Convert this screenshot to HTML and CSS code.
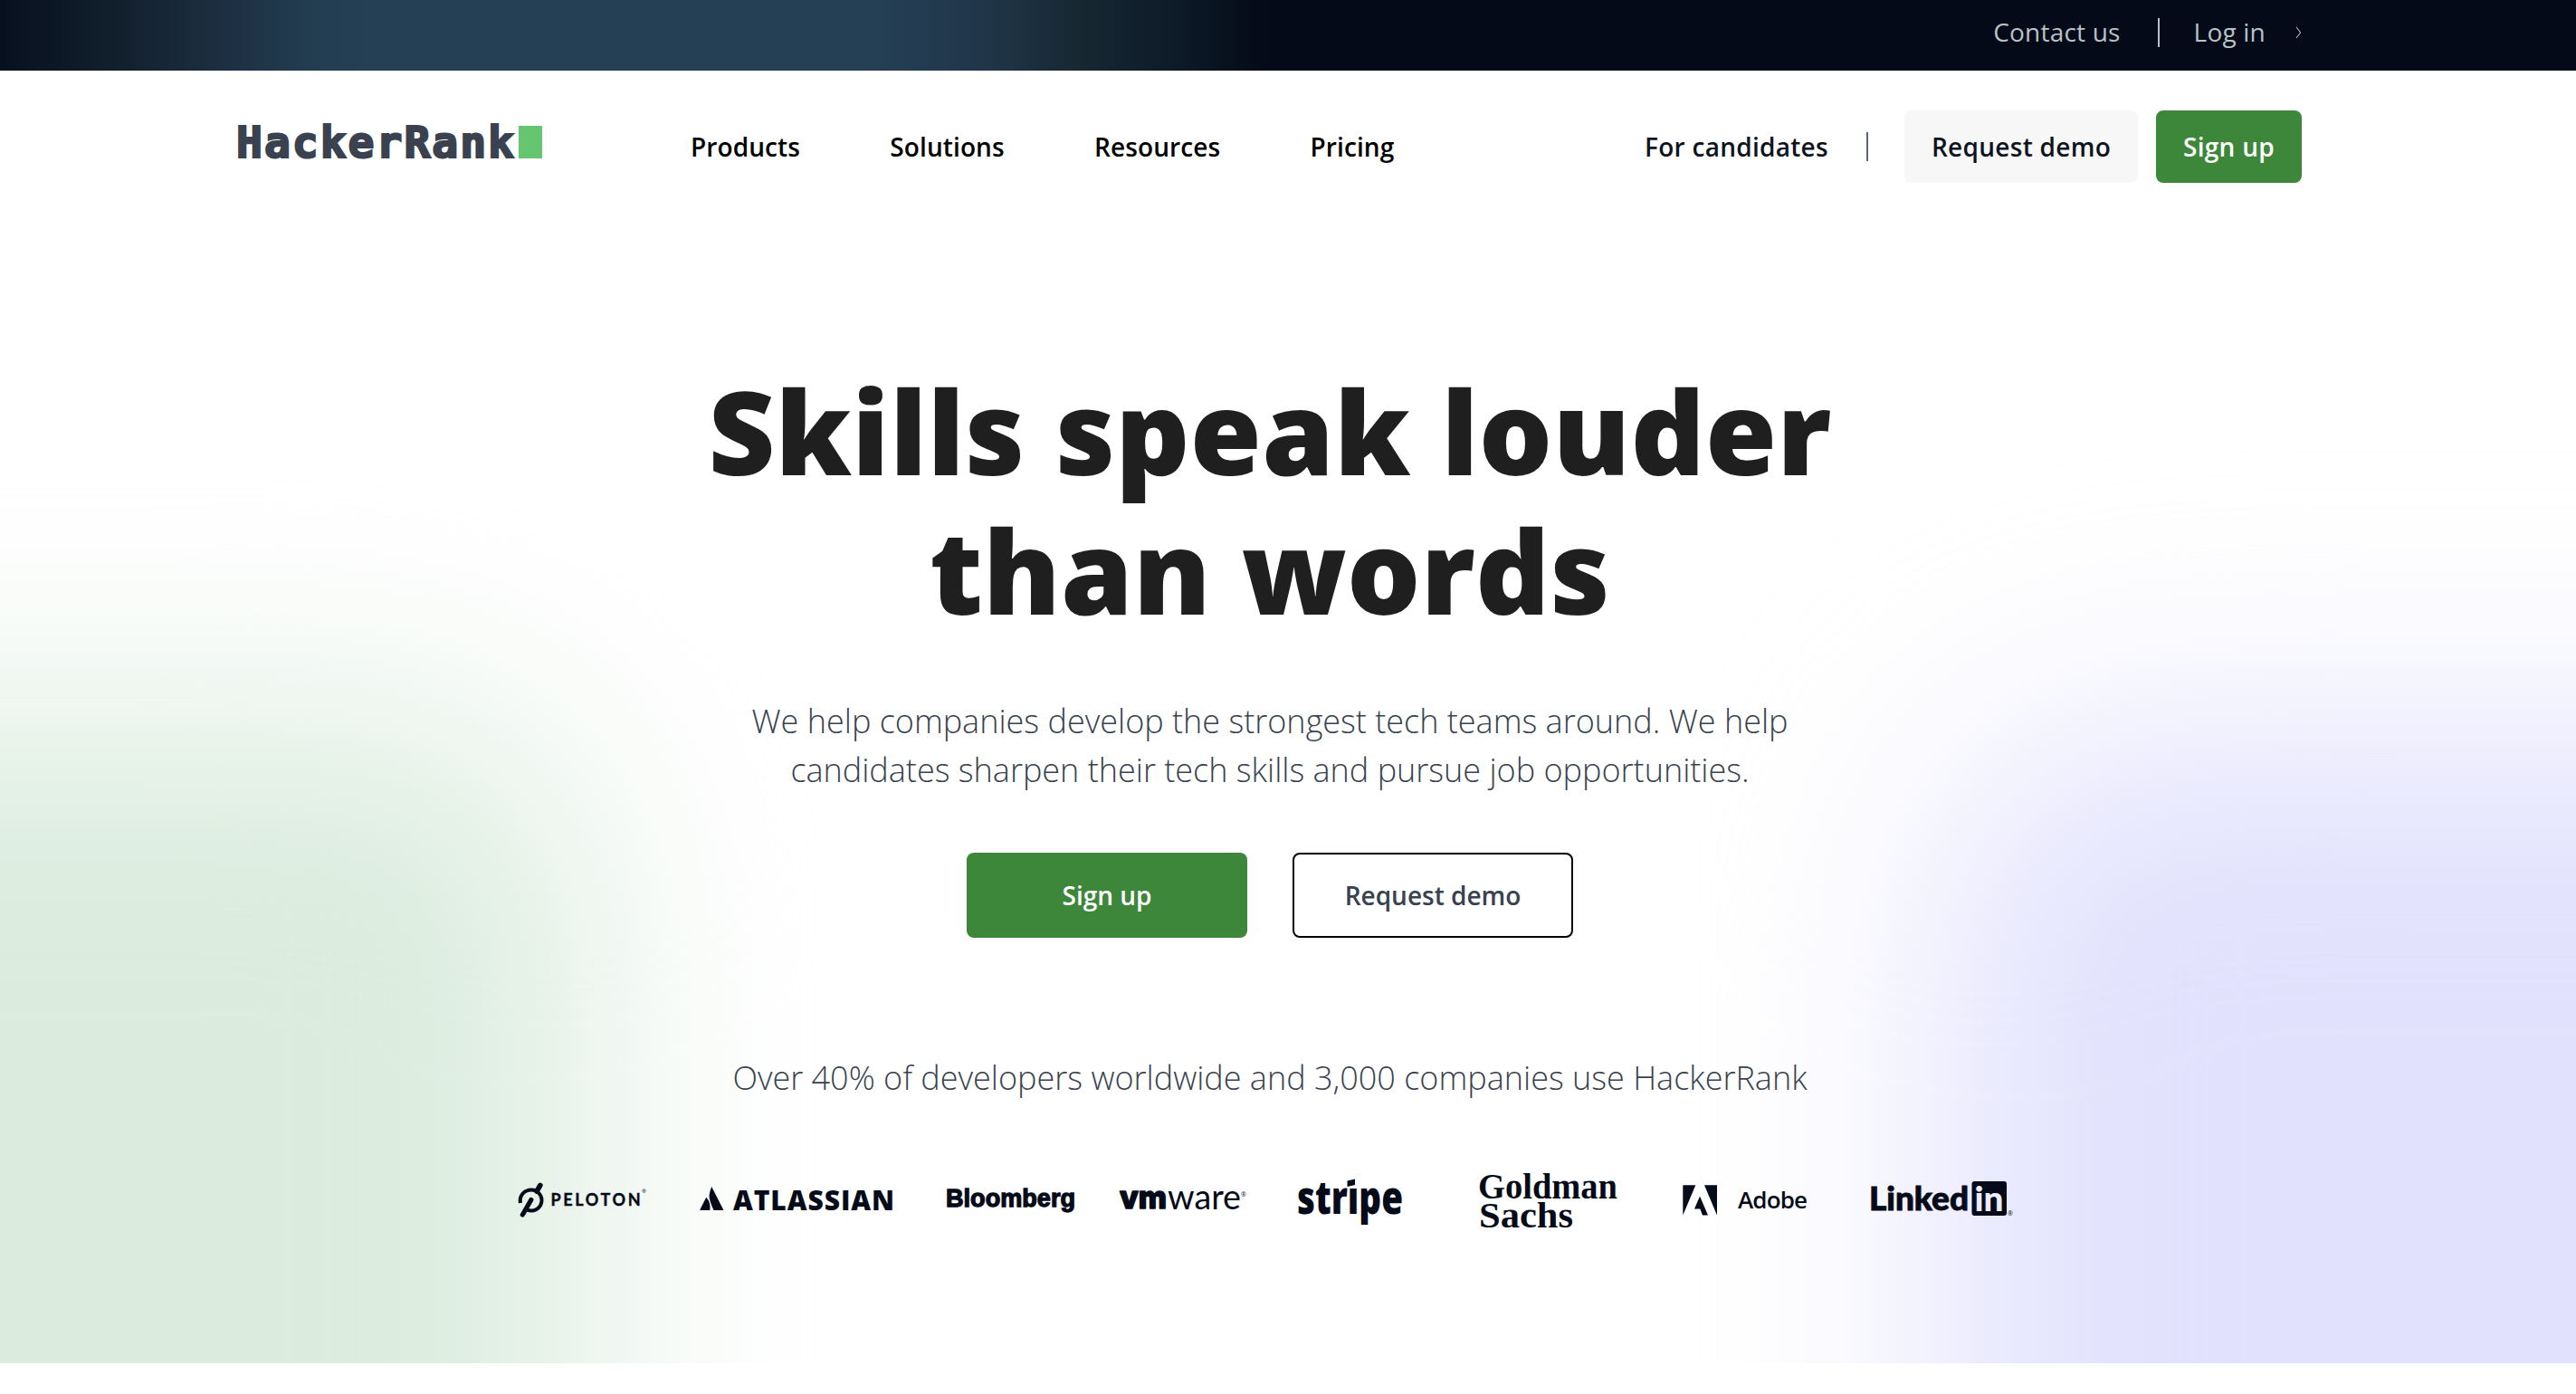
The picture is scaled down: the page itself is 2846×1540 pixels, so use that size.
FILE: index.html
```html
<!DOCTYPE html>
<html lang="en">
<head>
<meta charset="utf-8">
<title>HackerRank</title>
<link rel="stylesheet" href="styles.css">
</head>
<body>
<div class="topbar">
  <a class="topbar-link">Contact us</a>
  <span class="topbar-divider"></span>
  <a class="topbar-link">Log in</a>
  <svg class="chevron" viewBox="0 0 7 14"><path d="M1 1 L5.6 7 L1 13" fill="none" stroke="#a9b4bb" stroke-width="1.1"/></svg>
</div>
<header class="header">
  <svg class="brand" viewBox="0 0 340 50">
    <text x="-2" y="42" class="brand-text" textLength="307" lengthAdjust="spacing">HackerRank</text>
    <rect x="310" y="7" width="26" height="36" fill="#66c56f"/>
  </svg>
  <nav class="nav">
    <a>Products</a><a>Solutions</a><a>Resources</a><a>Pricing</a>
  </nav>
  <div class="actions">
    <a class="candidates">For candidates</a>
    <span class="divider"></span>
    <a class="btn btn-light">Request demo</a>
    <a class="btn btn-green">Sign up</a>
  </div>
</header>
<main class="hero">
  <div class="glow glow-green"></div>
  <div class="glow glow-violet"></div>
  <div class="hero-content">
    <h1>Skills speak louder<br>than words</h1>
    <p class="lead">We help companies develop the strongest tech teams around. We help<br>candidates sharpen their tech skills and pursue job opportunities.</p>
    <div class="cta">
      <a class="cta-btn cta-primary">Sign up</a>
      <a class="cta-btn cta-outline">Request demo</a>
    </div>
    <p class="stat">Over 40% of developers worldwide and 3,000 companies use HackerRank</p>
    <div class="logos">
      <svg class="peloton" width="141" height="74" viewBox="0 0 141 74">
        <g fill="none" stroke="#050b18" stroke-linecap="round">
          <path d="M1.900 40 C.5 31 7 25.500 14 25.500 A11.500 11.500 0 1 1 9.500 47.600" stroke-width="4" stroke-linecap="butt"/>
          <path d="M20 27 L23.800 20.500" stroke-width="5.600"/>
          <path d="M4.300 53 L13.800 36.500" stroke-width="5.200"/>
        </g>
        <text x="35.500" y="43.300" class="mark lato-bold" font-size="18" textLength="99">PELOTON</text>
        <text x="136" y="29" class="mark sans" font-size="6">®</text>
      </svg>
      <svg class="atlassian" width="215" height="74" viewBox="0 0 215 74">
        <path d="M0 48 L7.200 33.800 Q12.500 39 11.300 48 Z M13.200 22 Q11 27 10.500 32 Q10.500 37 15.500 48 L26.500 48 Z" fill="#050b18"/>
        <text x="37" y="48" class="mark sans-bold" font-size="30" textLength="178" lengthAdjust="spacing">ATLASSIAN</text>
      </svg>
      <svg class="bloomberg" width="142" height="74" viewBox="0 0 142 74">
        <text x="-1" y="44.300" class="mark grotesk" font-size="28.500" textLength="143" lengthAdjust="spacingAndGlyphs">Bloomberg</text>
      </svg>
      <svg class="vmware" width="141" height="74" viewBox="0 0 141 74">
        <text x="1" y="46" class="mark inter-round" font-size="35" textLength="52" lengthAdjust="spacingAndGlyphs">vm</text>
        <text x="54" y="46.500" class="mark lato" font-size="39" textLength="81" lengthAdjust="spacingAndGlyphs">ware</text>
        <text x="135" y="32.500" class="mark sans" font-size="7">®</text>
      </svg>
      <svg class="stripe" width="116" height="74" viewBox="0 0 116 74">
        <text x="-1" y="51.500" class="mark sans-black" font-size="51" textLength="117" lengthAdjust="spacingAndGlyphs">str&#305;pe</text>
        <path d="M54.500 15.500 L63 13.500 V20 L54.500 22Z" fill="#050b18"/>
      </svg>
      <svg class="goldman" width="155" height="74" viewBox="0 0 155 74">
        <text x="0" y="34.700" class="mark serif-bold" font-size="41" textLength="154" lengthAdjust="spacingAndGlyphs">Goldman</text>
        <text x="1" y="66.500" class="mark serif-bold" font-size="41" textLength="104" lengthAdjust="spacingAndGlyphs">Sachs</text>
      </svg>
      <svg class="adobe" width="139" height="74" viewBox="0 0 139 74">
        <path d="M.3 20.300 H14.300 L.3 53.500Z M24 20.300 H38 V53.500Z M19 32.500 L28 53.500 H22 L19.300 46.500 H13Z" fill="#050b18"/>
        <text x="61" y="45.700" class="mark sans-semi" font-size="26" textLength="77">Adobe</text>
      </svg>
      <svg class="linkedin" width="158" height="74" viewBox="0 0 158 74">
        <text x="-2" y="47.700" class="mark lato-black linked" font-size="36.500" textLength="110" lengthAdjust="spacingAndGlyphs">Linked</text>
        <rect x="111.500" y="16" width="38.500" height="38" rx="3" fill="#050b18"/>
        <text x="114.500" y="48.700" class="lato-black" fill="#edecfd" font-size="37" textLength="32" lengthAdjust="spacingAndGlyphs">in</text>
        <text x="151" y="54" class="mark sans" font-size="7">®</text>
      </svg>
    </div>
  </div>
</main>
</body>
</html>
```
FILE: styles.css
```css
* { box-sizing: border-box; }
body {
  margin: 0;
  background: #fff;
  font-family: "Open Sans", sans-serif;
  color: #0e141e;
}
.topbar {
  height: 78px;
  padding: 0 303px 0 0;
  display: flex;
  justify-content: flex-end;
  align-items: flex-start;
  background: linear-gradient(90deg, #07101f 0, #13212f 140px, #1d2f42 250px, #233e52 350px, #253f54 420px, #253f54 970px, #20364a 1085px, #172833 1190px, #0d1a28 1300px, #040a17 1400px);
}
.topbar-link { font-size: 28px; line-height: 38px; padding-top: 16px; color: #b7c3c8; letter-spacing: 0.2px; }
.topbar-divider { width: 2px; height: 32px; margin: 20px 38px 0 41px; background: #b7c3c8; }
.chevron { width: 7px; height: 14px; margin: 29px 0 0 33px; }
.header {
  height: 169px;
  padding: 44px 303px 0 263px;
  display: flex;
  font-size: 28px;
  font-weight: 600;
  letter-spacing: 0.28px;
}
.brand { width: 340px; height: 50px; margin-top: 10px; flex: none; overflow: visible; }
.brand-text { font: 700 48px "DejaVu Sans Mono", monospace; letter-spacing: 0; fill: #39424e; stroke: #39424e; stroke-width: 2.2; }
.nav { display: flex; gap: 99.3px; margin-left: 160px; line-height: 81px; color: #000; letter-spacing: 0.1px; }
.actions { display: flex; margin-left: auto; line-height: 81px; white-space: nowrap; }
.divider { width: 2px; height: 32px; margin: 24px 40px 0 42px; background: #5c6672; }
.btn { height: 80px; padding: 0 30px; border-radius: 8px; }
.btn-light { background: #f7f7f7; margin-right: 20px; }
.btn-green { background: #3c873a; color: #fff; }
.hero { position: relative; height: 1259px; overflow: hidden; padding-right: 40px; }
.glow { position: absolute; filter: blur(130px); height: 1600px; width: 1500px; }
.glow-green { left: -850px; top: 542px; background: #dbecde; border-radius: 200px; }
.glow-violet { left: 2147px; top: 562px; background: #e1e1fd; border-radius: 200px; }
.hero-content { position: relative; display: flex; flex-direction: column; align-items: center; }
h1 { margin: 152px 0 0; font-size: 128px; line-height: 154px; font-weight: 800; letter-spacing: 0.2px; color: #1f1f1f; text-align: center; white-space: nowrap; }
.lead, .stat { font-size: 36px; line-height: 54px; font-weight: 300; color: #39424e; text-align: center; white-space: nowrap; margin: 0; }
.lead { margin-top: 63px; }
.cta { display: flex; gap: 50px; margin-top: 64px; }
.cta-btn { width: 310px; height: 94px; line-height: 94px; border-radius: 8px; font-size: 28px; font-weight: 600; text-align: center; }
.cta-primary { background: #3c873a; color: #fff; }
.cta-outline { background: #fff; border: 2px solid #000; color: #39424e; line-height: 90px; }
.stat { margin-top: 128px; }
.logos { display: flex; width: 1660px; height: 74px; margin-top: 71px; }
.logos svg { flex: none; overflow: visible; }
.atlassian { margin-left: 59px; }
.bloomberg { margin-left: 58px; }
.vmware { margin-left: 48px; }
.stripe { margin-left: 57px; }
.goldman { margin-left: 83px; }
.adobe { margin-left: 71px; }
.linkedin { margin-left: 69px; }
.mark { fill: #050b18; }
.sans { font-family: "Open Sans", sans-serif; }
.sans-semi { font-family: "Open Sans", sans-serif; font-weight: 600; }
.sans-bold { font-family: "Open Sans", sans-serif; font-weight: 800; }
.sans-black { font-family: "Open Sans", sans-serif; font-weight: 800; }
.lato { font-family: Lato, sans-serif; }
.lato-bold { font-family: Lato, sans-serif; font-weight: 700; stroke: #050b18; stroke-width: 0.4; }
.lato-black { font-family: Lato, sans-serif; font-weight: 900; }
.linked { stroke: #050b18; stroke-width: 0.9; }
.inter-round { font-family: Inter, sans-serif; font-weight: 800; stroke: #050b18; stroke-width: 1.6; stroke-linejoin: round; }
.grotesk { font-family: "Liberation Sans", sans-serif; font-weight: 700; stroke: #050b18; stroke-width: 1.3; }
.serif-bold { font-family: "Liberation Serif", serif; font-weight: 700; }
```
